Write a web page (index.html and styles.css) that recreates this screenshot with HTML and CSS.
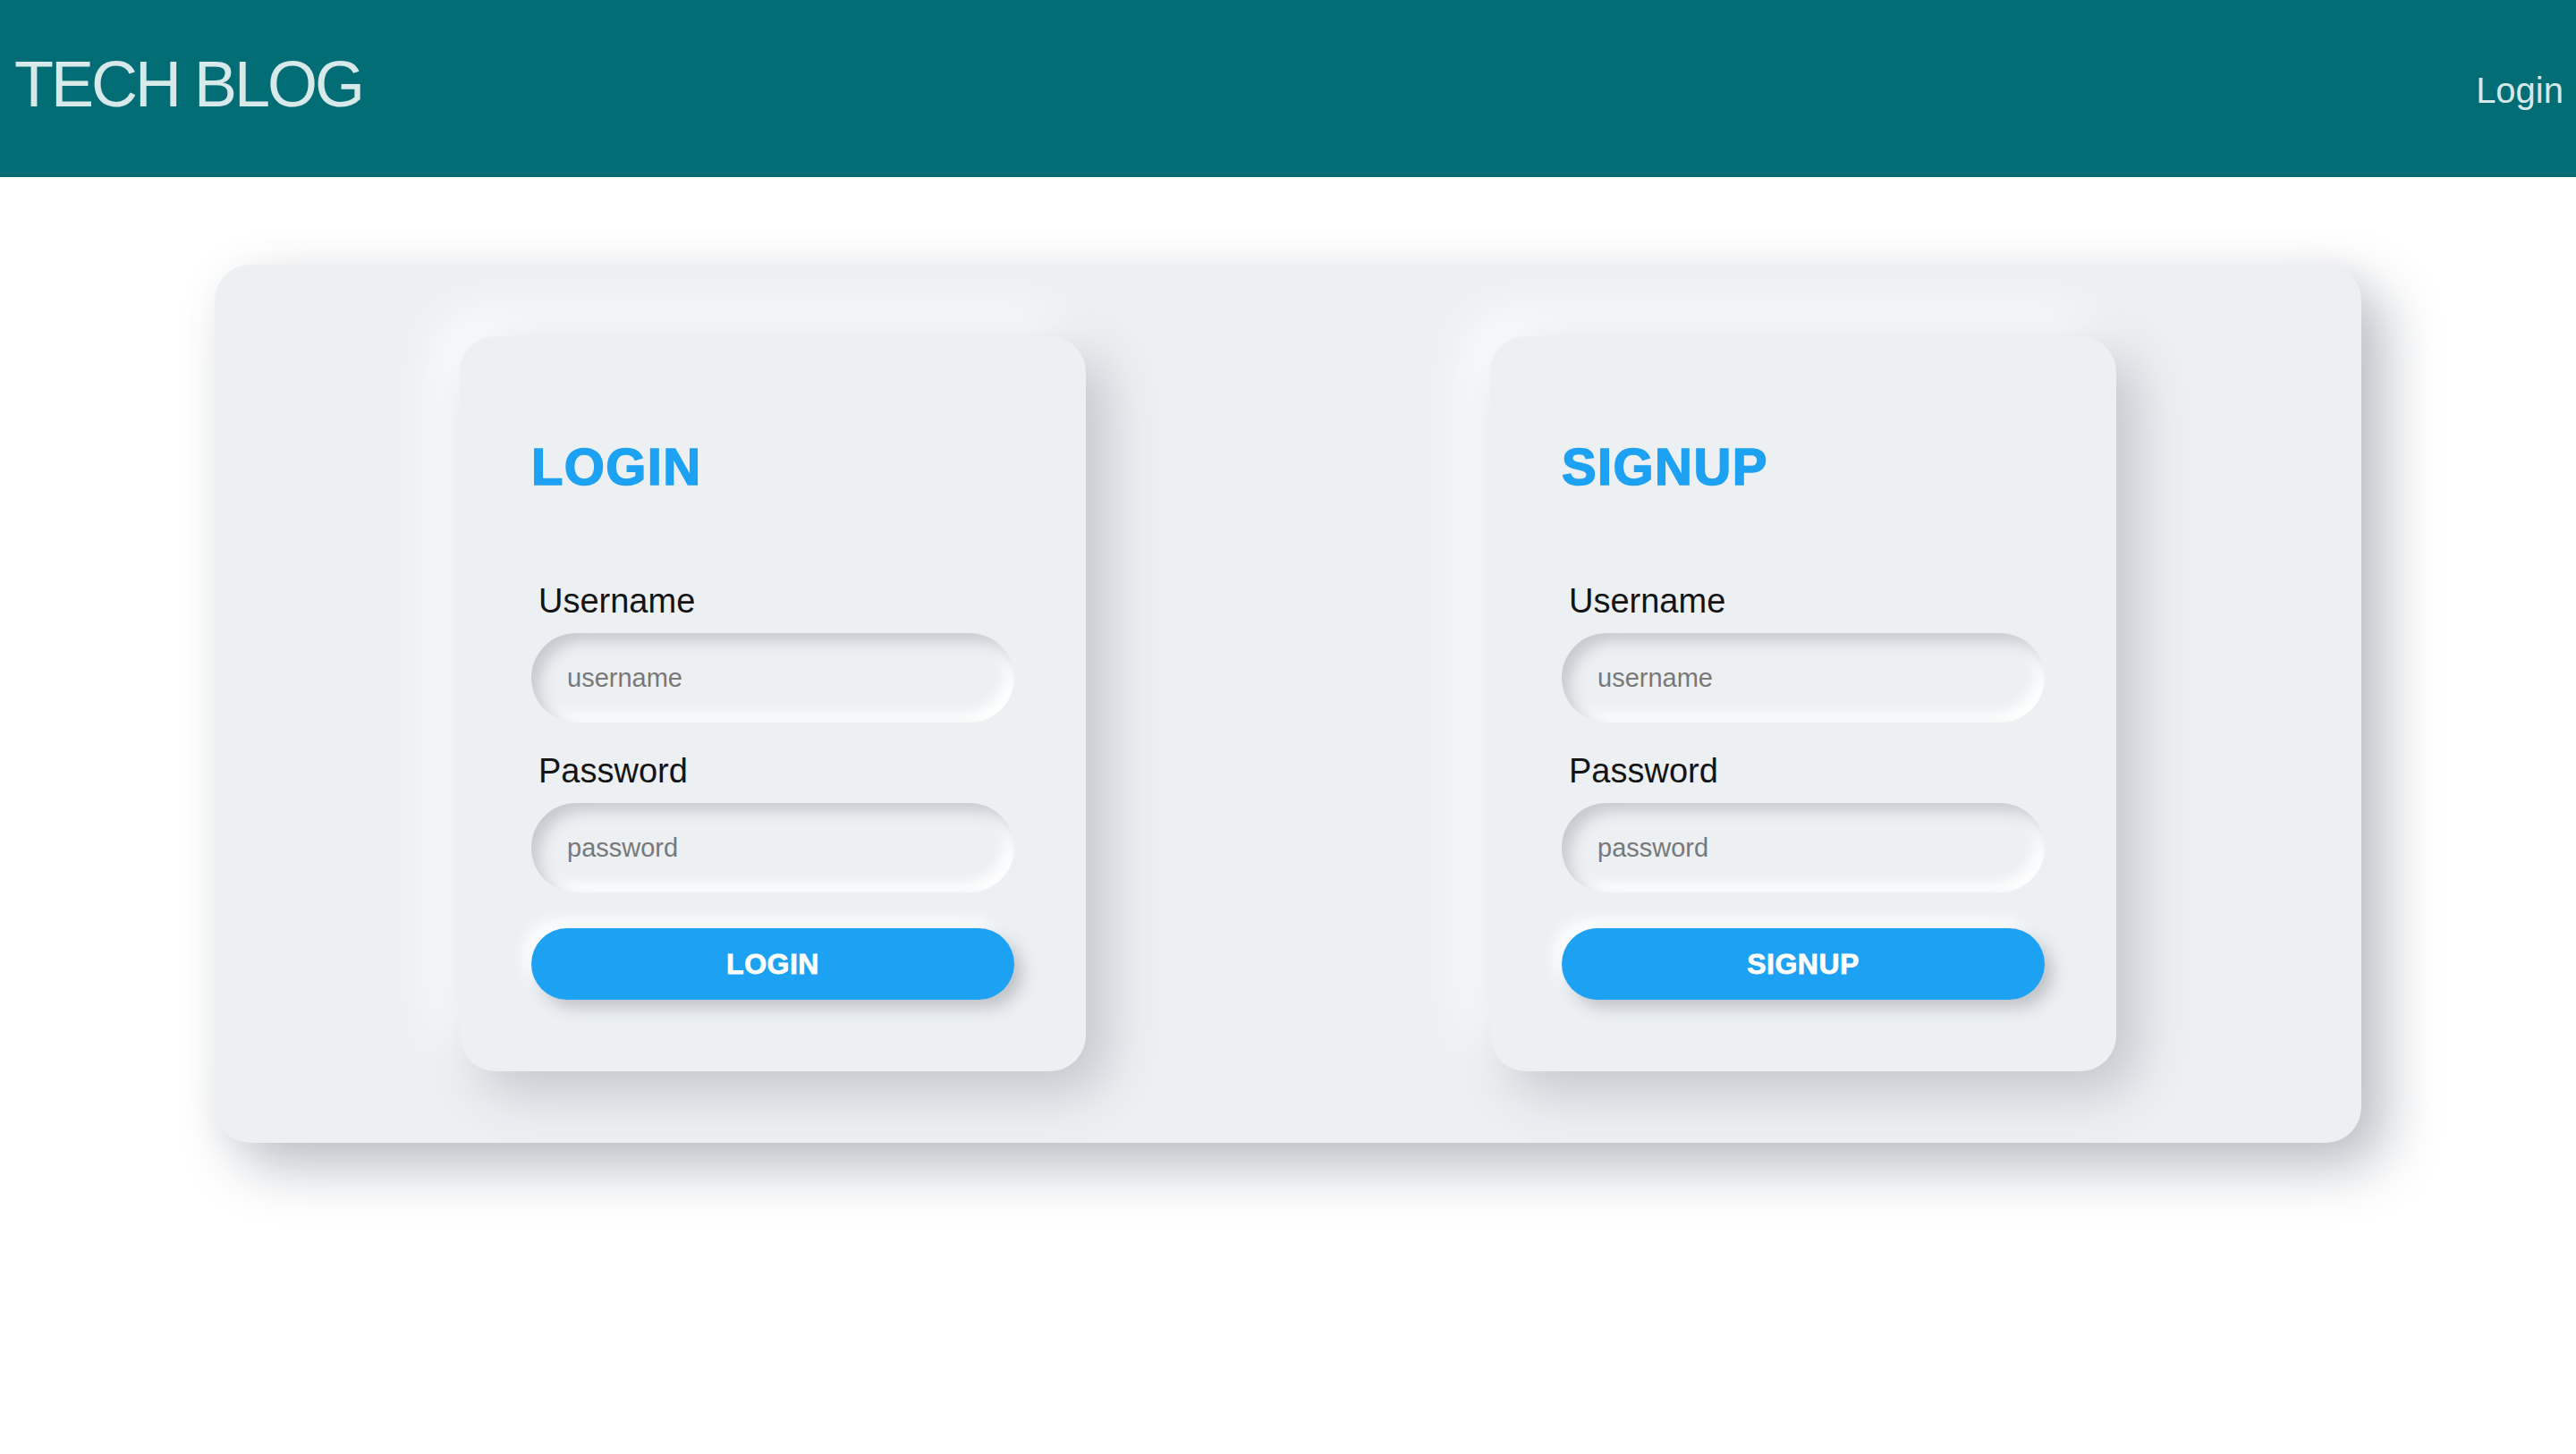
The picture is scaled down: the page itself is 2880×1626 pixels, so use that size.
FILE: index.html
```html
<!DOCTYPE html>
<html lang="en">
<head>
<meta charset="utf-8">
<title>Tech Blog</title>
<link rel="stylesheet" href="styles.css">
</head>
<body>
<header class="topbar">
  <h1 class="brand">TECH BLOG</h1>
  <a class="nav-link" href="#">Login</a>
</header>
<main class="panel">
  <section class="card">
    <h2 class="card-title">LOGIN</h2>
    <label class="field-label" for="login-username">Username</label>
    <input class="field" id="login-username" type="text" placeholder="username">
    <label class="field-label" for="login-password">Password</label>
    <input class="field field-last" id="login-password" type="password" placeholder="password">
    <button class="btn" type="button">LOGIN</button>
  </section>
  <section class="card">
    <h2 class="card-title">SIGNUP</h2>
    <label class="field-label" for="signup-username">Username</label>
    <input class="field" id="signup-username" type="text" placeholder="username">
    <label class="field-label" for="signup-password">Password</label>
    <input class="field field-last" id="signup-password" type="password" placeholder="password">
    <button class="btn" type="button">SIGNUP</button>
  </section>
</main>
</body>
</html>
```
FILE: styles.css
```css
* { box-sizing: border-box; }

html, body {
  margin: 0;
  padding: 0;
  background: #ffffff;
  font-family: "Liberation Sans", Arial, sans-serif;
}

body {
  min-height: 1626px;
}

.topbar {
  height: 198px;
  background: #036d75;
  display: flex;
  justify-content: space-between;
  align-items: flex-start;
  padding: 0 14px 0 16px;
}

.brand {
  margin: 58px 0 0 0;
  font-size: 72px;
  line-height: 72px;
  font-weight: 400;
  letter-spacing: -3px;
  color: #d8e9ea;
}

.nav-link {
  margin-top: 81px;
  font-size: 40px;
  line-height: 40px;
  color: #d6e8e8;
  text-decoration: none;
}

.panel {
  width: 2400px;
  margin: 98px auto 0;
  padding: 80px 48px;
  background: #ecf0f3;
  border-radius: 40px;
  box-shadow: 26px 26px 64px #b9bec4, -20px -20px 56px #ffffff, 0 0 24px rgba(200, 205, 210, 0.25);
  display: grid;
  grid-template-columns: 1fr 1fr;
  justify-items: center;
}

.card {
  width: 700px;
  padding: 80px;
  background: #ecf0f3;
  border-radius: 40px;
  box-shadow: 22px 22px 60px #c1c5ca, -22px -22px 60px #ffffff;
  display: flex;
  flex-direction: column;
}

.card-title {
  margin: 34px 0 96px 0;
  font-size: 58px;
  line-height: 64px;
  font-weight: 700;
  letter-spacing: 1.4px;
  color: #1da1f2;
  -webkit-text-stroke: 1.6px #1da1f2;
}

.field-label {
  display: block;
  margin: 0 0 14px 8px;
  font-size: 38px;
  line-height: 44px;
  color: #141414;
}

.field {
  display: block;
  width: 100%;
  height: 100px;
  margin: 0 0 32px 0;
  padding: 0 40px;
  border: none;
  outline: none;
  border-radius: 50px;
  background: #ecf0f3;
  font-family: "Liberation Sans", Arial, sans-serif;
  font-size: 29px;
  color: #333;
  box-shadow: inset 9px 9px 16px #c6cacf, inset -9px -9px 16px #ffffff;
}

.field::placeholder {
  color: #787878;
}

.field-last {
  margin-bottom: 40px;
}

.btn {
  display: block;
  width: 100%;
  height: 80px;
  border: none;
  border-radius: 40px;
  background: #1da1f2;
  color: #ffffff;
  font-family: "Liberation Sans", Arial, sans-serif;
  font-size: 32px;
  font-weight: 700;
  letter-spacing: 0.5px;
  -webkit-text-stroke: 0.8px #ffffff;
  box-shadow: 9px 9px 18px #bfc3c8, -9px -9px 18px #ffffff;
  cursor: pointer;
}
```
